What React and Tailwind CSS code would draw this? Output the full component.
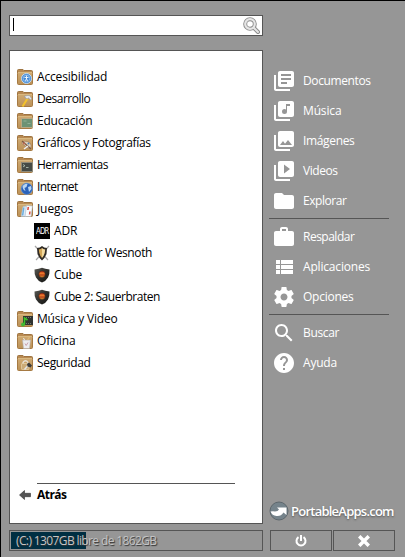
import React from "react";
import { MdLibraryBooks, MdLibraryMusic, MdPhotoLibrary, MdVideoLibrary, MdFolder, MdHelp } from "react-icons/md";

const COG =
  "M19.43 12.98c.04-.32.07-.64.07-.98s-.03-.66-.07-.98l2.11-1.65c.19-.15.24-.42.12-.64l-2-3.46c-.12-.22-.39-.3-.61-.22l-2.49 1c-.52-.4-1.08-.73-1.69-.98l-.38-2.65C14.46 2.18 14.25 2 14 2h-4c-.25 0-.46.18-.49.42l-.38 2.65c-.61.25-1.17.59-1.69.98l-2.49-1c-.23-.09-.49 0-.61.22l-2 3.46c-.13.22-.07.49.12.64l2.11 1.65c-.04.32-.07.65-.07.98s.03.66.07.98l-2.11 1.65c-.19.15-.24.42-.12.64l2 3.46c.12.22.39.3.61.22l2.49-1c.52.4 1.08.73 1.69.98l.38 2.65c.03.24.24.42.49.42h4c.25 0 .46-.18.49-.42l.38-2.65c.61-.25 1.17-.59 1.69-.98l2.49 1c.23.09.49 0 .61-.22l2-3.46c.12-.22.07-.49-.12-.64l-2.11-1.65zM12 15.5c-1.93 0-3.5-1.57-3.5-3.5s1.57-3.5 3.5-3.5 3.5 1.57 3.5 3.5-1.57 3.5-3.5 3.5z";
const WORK =
  "M20 6h-4V4c0-1.11-.89-2-2-2h-4c-1.11 0-2 .89-2 2v2H4c-1.11 0-2 .89-2 2v11c0 1.11.89 2 2 2h16c1.11 0 2-.89 2-2V8c0-1.11-.89-2-2-2zm-6 0h-4V4h4v2z";
const LIST = "M4 14h4v-4H4v4zm0 5h4v-4H4v4zM4 9h4V5H4v4zm5 5h12v-4H9v4zm0 5h12v-4H9v4zM9 5v4h12V5H9z";
const LENS =
  "M15.5 14h-.79l-.28-.27C15.41 12.59 16 11.11 16 9.5 16 5.91 13.09 3 9.5 3S3 5.91 3 9.5 5.91 16 9.5 16c1.61 0 3.09-.59 4.23-1.57l.27.28v.79l5 4.99L20.49 19l-4.99-5zm-6 0C7.01 14 5 11.99 5 9.5S7.01 5 9.5 5 14 7.01 14 9.5 11.99 14 9.5 14z";

function Glyph({ d }) {
  return (
    <svg viewBox="0 0 24 24" className="h-6 w-6 shrink-0 fill-current">
      <path d={d} />
    </svg>
  );
}

function Folder({ children }) {
  return (
    <svg viewBox="0 0 16 16" className="h-4 w-4 shrink-0">
      <defs>
        <linearGradient id="tan" x1="0" y1="0" x2="0" y2="1">
          <stop offset="0" stopColor="#cfa971" />
          <stop offset="1" stopColor="#bb9157" />
        </linearGradient>
      </defs>
      <path d="M.5 4V1.500q0-1 1-1h4.500l1 1h7.500q1 0 1 1V4z" fill="#b98a52" stroke="#9f7441" />
      <rect x=".5" y="3.5" width="15" height="12" rx="1" fill="url(#tan)" stroke="#a67a43" />
      <path d="M1 3.5h14" stroke="#d9b981" />
      {children}
    </svg>
  );
}

const BADGES = {
  access: (
    <>
      <circle cx="9.5" cy="9.5" r="5" fill="#4488d4" stroke="#c3dcf3" />
      <circle cx="9.5" cy="9.5" r="3.3" fill="none" stroke="#a4cdf2" strokeWidth=".7" />
      <path d="M7.500 8.500h4M9.500 6.500v3.500M9.500 9.500l-1 2.500M9.500 9.500l1 2.500" stroke="#f4faff" strokeWidth=".9" />
    </>
  ),
  dev: (
    <>
      <path d="M5.500 15.500L10.500 7.500" stroke="#f4c32c" strokeWidth="2" />
      <path d="M7 5.500L10 4.500h2.500l2.500 3.500-1.500.8-2-1.800-1.500 1-1.500-1.500z" fill="#e2e5e8" stroke="#8b8f93" strokeWidth=".5" />
    </>
  ),
  edu: (
    <>
      <rect x="4.5" y="5.500" width="11" height="9" fill="#6c9274" stroke="#b8a883" />
      <path d="M6.500 8h3M10.500 10.500h3" stroke="#8fb096" />
    </>
  ),
  art: (
    <>
      <path d="M4.500 8q2-3 6-1.500l3 2q2 5-2 5L8 11z" fill="#dccfb8" stroke="#9c7755" strokeWidth=".7" />
      <path d="M5 6l9 8" stroke="#7d5a43" strokeWidth="1.200" />
      <circle cx="7" cy="8.500" r="1" fill="#c2664f" />
      <circle cx="11.500" cy="8.500" r="1" fill="#5486b9" />
      <path d="M7 14l4-3" stroke="#efefef" strokeWidth="1.500" />
    </>
  ),
  term: (
    <>
      <rect x="4.500" y="5.500" width="11" height="9" fill="#454b46" stroke="#8f8a78" />
      <path d="M6 7.500l2 1.200-2 1.200M9 10.500h2.500" stroke="#b9c9b9" fill="none" strokeWidth=".8" />
    </>
  ),
  net: (
    <>
      <circle cx="9.800" cy="9.800" r="5.700" fill="#2a62ba" stroke="#6b9ddc" strokeWidth=".6" />
      <path d="M5.500 7q3-3 5-2l-1 3-2 1 1 3q-3-1-3-5zM11 8l3-1 .500 3-2.500 3z" fill="#b9d6f2" />
    </>
  ),
  games: (
    <>
      <path d="M6 5.500l4-.5-1.500 10.500H4z" fill="#dce9f5" stroke="#a5b6c6" strokeWidth=".5" />
      <path d="M9.500 4.500l6 .5-1.500 10.500H8z" fill="#f9fbfd" stroke="#9eb2c8" strokeWidth=".5" />
      <path d="M10.500 6h1.600l-.4 3h-1.600zM12.200 10.500h1.500l-.4 3h-1.500z" fill="#da4d45" />
      <path d="M6.800 6.500l-1.200 8" stroke="#6aaee0" strokeWidth="1.500" />
    </>
  ),
  media: (
    <>
      <rect x="6" y="5" width="10" height="9" fill="#303330" />
      <path d="M9 6.500h6M9 12.500h6" stroke="#6e756e" strokeDasharray="1 1" />
      <path d="M7.500 13.500V7l3 2" stroke="#39c32b" strokeWidth="1.600" fill="none" />
      <circle cx="6" cy="13.500" r="1.900" fill="#42b933" />
    </>
  ),
  office: (
    <>
      <path d="M5.500 7h8l-1 8.500H6.500z" fill="#ececef" stroke="#b5b0ad" strokeWidth=".6" />
      <path d="M8 10.500l1.200 2 1.800-3" stroke="#c9a0ab" fill="none" />
      <path d="M10.500 7l2-3" stroke="#e0b878" strokeWidth="1.300" />
      <path d="M7.500 7l-1-2" stroke="#eee" />
    </>
  ),
  lock: (
    <>
      <path d="M6 9V7.500q2.500-3.500 5 0V9" fill="none" stroke="#e8e2d8" strokeWidth="1.300" />
      <rect x="4.500" y="8.500" width="7.500" height="6" rx=".7" fill="#cbab78" stroke="#ead4ac" strokeWidth=".7" />
      <path d="M7.500 14.500l4-4.500" stroke="#e6e6e6" strokeWidth="1.500" />
      <path d="M10 9l2-1.500 3 3-1.500 2-3-1z" fill="#3c3c3c" />
    </>
  ),
};

function AdrIcon() {
  return (
    <span className="flex h-4 w-4 shrink-0 items-center justify-center bg-black text-white">
      <span className="font-['DejaVu_Sans_Condensed','DejaVu_Sans',sans-serif] text-[9px] leading-none tracking-[-0.9px] scale-x-[0.85]">
        ADR
      </span>
    </span>
  );
}

function Wesnoth() {
  return (
    <svg viewBox="0 0 16 16" className="h-4 w-4 shrink-0">
      <path d="M1 1l13 14M15 1L2 15" stroke="#a6a6a6" strokeWidth="1.2" />
      <path d="M3 3q3 0 5-2 2 2 5 2l-.5 6Q11 13 8 15.500 5 13 3.500 9z" fill="#302b25" />
      <path d="M4.800 4.500Q7 4 8 3v10Q5 10 4.800 4.500z" fill="#d3a758" />
      <path d="M11.200 4.500Q9 4 8 3v10q3-3 3.200-8.500z" fill="#f2d99d" />
    </svg>
  );
}

function Cube() {
  return (
    <svg viewBox="0 0 16 16" className="h-4 w-4 shrink-0">
      <defs>
        <linearGradient id="ember" x1="0" y1="0" x2="0" y2="1">
          <stop offset="0" stopColor="#c8371c" />
          <stop offset=".4" stopColor="#ee7d2c" />
          <stop offset=".6" stopColor="#b5401a" />
          <stop offset="1" stopColor="#e0a03a" />
        </linearGradient>
        <linearGradient id="iron" x1="0" y1="0" x2="1" y2="1">
          <stop offset="0" stopColor="#5c5b55" />
          <stop offset=".5" stopColor="#2d2d2a" />
          <stop offset="1" stopColor="#141412" />
        </linearGradient>
      </defs>
      <path d="M.5 2.500Q5 2 8 .8q3 1.200 7.500 1.700.3 5-1.500 8-2 3.500-6 5-4-1.500-6-5-1.800-3-1.500-8z" fill="url(#iron)" />
      <circle cx="8" cy="7.300" r="3.200" fill="url(#ember)" stroke="#3d1a10" strokeWidth=".5" />
    </svg>
  );
}

const ITEMS = [
  ["Accesibilidad", "access", "tracking-[-0.16px]"],
  ["Desarrollo", "dev", "tracking-[-0.48px]"],
  ["Educación", "edu", "tracking-[-0.2px]"],
  ["Gráficos y Fotografías", "art", "tracking-[-0.32px]"],
  ["Herramientas", "term", "tracking-[-0.5px]"],
  ["Internet", "net", "tracking-[-0.55px]"],
  ["Juegos", "games", "tracking-[-0.1px]"],
  ["ADR", AdrIcon, "tracking-[-0.1px]"],
  ["Battle for Wesnoth", Wesnoth, "tracking-[-0.38px]"],
  ["Cube", Cube, "tracking-[-0.25px]"],
  ["Cube 2: Sauerbraten", Cube, "tracking-[-0.47px]"],
  ["Música y Video", "media", "tracking-[-0.18px]"],
  ["Oficina", "office", "tracking-[-0.1px]"],
  ["Seguridad", "lock", "tracking-[-0.32px]"],
];

function Row({ item }) {
  const [label, kind, track] = item;
  const Icon = kind;
  const nested = typeof kind !== "string";
  return (
    <li className={"flex h-[22px] items-center gap-1 " + (nested ? "pl-6" : "pl-[7px]")}>
      {nested ? <Icon /> : <Folder>{BADGES[kind]}</Folder>}
      <span className={"whitespace-nowrap " + track}>{label}</span>
    </li>
  );
}

function Link({ icon, label, track }) {
  return (
    <li className="flex h-[30px] items-center gap-[7px] pl-[3px] text-white">
      {icon}
      <span className={"whitespace-nowrap " + track}>{label}</span>
    </li>
  );
}

const md = "h-6 w-6 shrink-0";

export default function App() {
  return (
    <div className="flex h-[557px] w-[405px] overflow-hidden border-t border-l border-black bg-[#969696] pt-[14px] pl-2 font-['Open_Sans','Noto_Sans',sans-serif] text-[12px] leading-4 text-black">
      <main className="flex w-[254px] shrink-0 flex-col">
        <div className="flex h-[21px] items-center justify-between border border-[#555] bg-white pr-0.5 pl-[3px]">
          <span className="mb-0.5 h-[13px] w-px bg-black" />
          <svg viewBox="0 0 17 17" className="h-[17px] w-[17px]">
            <path d="M10.500 10.500l4.500 4.500" stroke="#8b8b8b" strokeWidth="4" strokeLinecap="round" />
            <circle cx="7" cy="7" r="4.800" fill="none" stroke="#8b8b8b" strokeWidth="4" />
            <circle cx="7" cy="7" r="4.800" fill="none" stroke="#e5e5e5" strokeWidth="2.200" />
            <path d="M10.500 10.500l4.500 4.500" stroke="#e5e5e5" strokeWidth="2" strokeLinecap="round" />
          </svg>
        </div>
        <section className="mt-[14px] flex h-[474px] flex-col border border-[#555] bg-white pt-[15px]">
          <ul>
            {ITEMS.map((item) => (
              <Row key={item[0]} item={item} />
            ))}
          </ul>
          <div className="mt-auto mr-[27px] ml-[27px] border-t border-[#555]" />
          <div className="mt-[3px] mb-[20px] flex items-center gap-[6px] pl-[9px] font-bold">
            <svg viewBox="0 0 12 10" className="h-[10px] w-3">
              <path d="M.500 5L5.500.500V3.300H11.500V6.700H5.500V9.500z" fill="#555" stroke="#333" strokeWidth=".6" />
            </svg>
            <span className="tracking-[-0.55px]">Atrás</span>
          </div>
        </section>
        <div className="mt-[6px] flex h-[21px] border border-[#555] p-px">
          <div className="h-[17px] w-[75px] bg-[#002f42]">
            <div className="pl-[5px] leading-[17px] tracking-[-0.62px] whitespace-nowrap text-[#c4c4c4] [text-shadow:1px_1px_1px_#333]">
              (C:) 1307GB libre de 1862GB
            </div>
          </div>
        </div>
      </main>
      <aside className="ml-[6px] flex w-[127px] shrink-0 flex-col pt-[51px]">
        <ul>
          <Link icon={<MdLibraryBooks className={md} />} label="Documentos" track="tracking-[-0.38px]" />
          <Link icon={<MdLibraryMusic className={md} />} label="Música" track="tracking-[-0.15px]" />
          <Link icon={<MdPhotoLibrary className={md} />} label="Imágenes" track="tracking-[-0.35px]" />
          <Link icon={<MdVideoLibrary className={md} />} label="Videos" track="tracking-[-0.45px]" />
          <Link icon={<MdFolder className={md} />} label="Explorar" track="tracking-[-0.45px]" />
        </ul>
        <hr className="mt-[2px] mb-[3px] w-[120px] border-t border-[#555]" />
        <ul>
          <Link icon={<Glyph d={WORK} />} label="Respaldar" track="tracking-[-0.5px]" />
          <Link icon={<Glyph d={LIST} />} label="Aplicaciones" track="tracking-[-0.18px]" />
          <Link icon={<Glyph d={COG} />} label="Opciones" track="tracking-[-0.25px]" />
        </ul>
        <hr className="mt-[2px] mb-[3px] w-[120px] border-t border-[#555]" />
        <ul>
          <Link icon={<Glyph d={LENS} />} label="Buscar" track="tracking-[-0.35px]" />
          <Link icon={<MdHelp className={md} />} label="Ayuda" track="tracking-[-0.2px]" />
        </ul>
        <div className="mt-auto flex h-5 items-center gap-[2px] text-white">
          <svg viewBox="0 0 20 20" className="h-5 w-5 shrink-0">
            <circle cx="10" cy="10" r="9" fill="#75838b" stroke="#5d676d" />
            <path d="M1.500 10.500Q4 10 6 10.500 9 10.500 10 8.500L8 6.500H17.500V14L14.500 11.500Q12 15.500 7.500 15 3 14.500 1.500 10.500z" fill="#fff" />
          </svg>
          <span className="text-[13px] font-semibold tracking-[-0.76px] whitespace-nowrap [text-shadow:0_1px_2px_#555]">PortableApps.com</span>
        </div>
        <div className="mt-[9px] mb-[6px] ml-px flex gap-px text-white">
          <div className="flex h-[21px] w-[62px] items-center justify-center border border-[#555]">
            <svg viewBox="0 0 12 12" className="h-3 w-3 fill-none stroke-white stroke-2">
              <path d="M3.500 2.200a4.500 4.500 0 1 0 5 0M6 0v6" />
            </svg>
          </div>
          <div className="flex h-[21px] w-[62px] items-center justify-center border border-[#555]">
            <svg viewBox="0 0 12 12" className="h-3 w-3 fill-none stroke-white stroke-[3.5]">
              <path d="M1.200 1.200l9.600 9.600M10.800 1.200L1.200 10.800" />
            </svg>
          </div>
        </div>
      </aside>
    </div>
  );
}
